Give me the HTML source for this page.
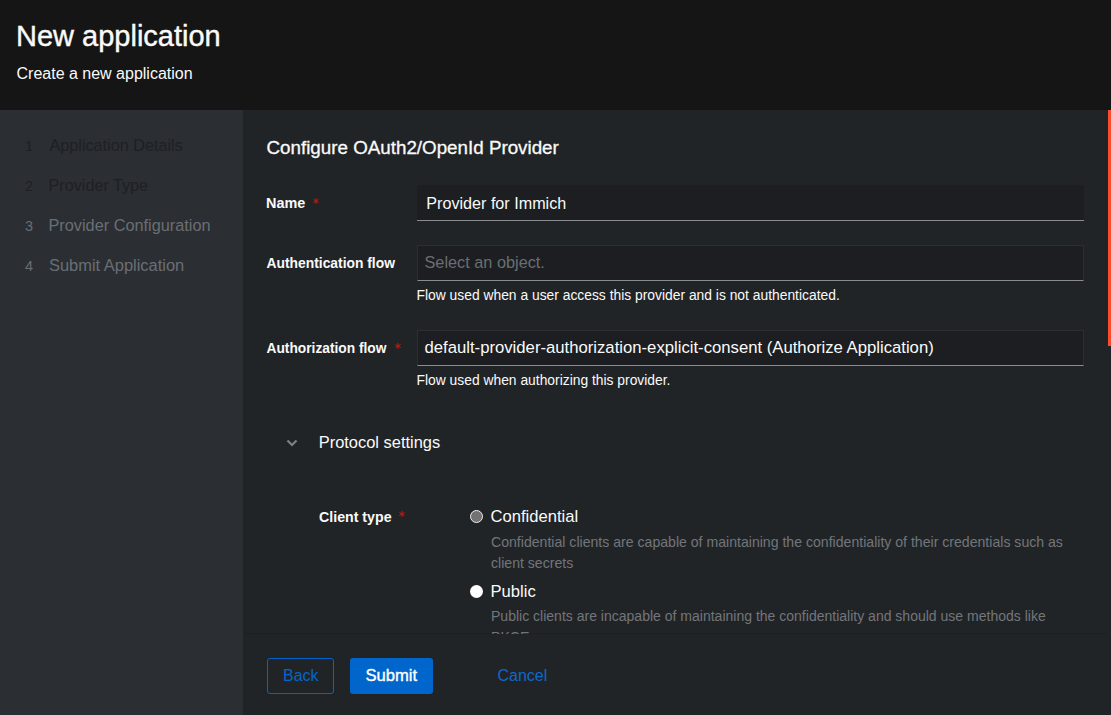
<!DOCTYPE html>
<html><head><meta charset="utf-8">
<style>
html,body{margin:0;padding:0;width:1111px;height:715px;overflow:hidden;background:#212427;font-family:"Liberation Sans",sans-serif;}
.a{position:absolute;white-space:nowrap;line-height:1;}
#hdr{position:absolute;left:0;top:0;width:1111px;height:110px;background:#151515;}
#nav{position:absolute;left:0;top:110px;width:243px;height:605px;background:#2b2e33;}
#main{position:absolute;left:243px;top:110px;width:868px;height:605px;background:#212427;}
#thumb{position:absolute;left:1108px;top:110px;width:3px;height:236px;background:#fd4b2d;}
.t{color:#fafafa;}
.lbl{font-weight:bold;font-size:14px;color:#fafafa;}
.ast{position:absolute;}
.inp{position:absolute;left:417px;width:667px;height:36px;box-sizing:border-box;background:#1c1e21;}
.inp.b{border:1px solid #2b2e33;border-bottom-color:#8a8d90;}
.inp.nb{border-bottom:1px solid #8a8d90;}
.help{font-size:13.85px;color:#fafafa;}
.desc{font-size:14.1px;color:#72767b;}
.nvn{font-size:14.5px;}
.nvl{font-size:16.2px;}
.dk{color:#1e2024;}
.gr{color:#6a6e73;}
.radio{position:absolute;left:470px;width:13px;height:13px;border-radius:50%;box-sizing:border-box;}
#clip{position:absolute;left:243px;top:110px;width:868px;height:524px;overflow:hidden;}
</style></head><body>
<div id="hdr"></div>
<div class="a t" style="left:16px;top:21.5px;font-size:29px;-webkit-text-stroke:0.4px #fafafa;">New application</div>
<div class="a t" style="left:16.5px;top:66.2px;font-size:16px;">Create a new application</div>

<div id="nav"></div>
<div class="a nvn dk" style="left:25px;top:138.7px;">1</div>
<div class="a nvl dk" style="left:49.5px;top:137.4px;">Application Details</div>
<div class="a nvn dk" style="left:25px;top:178.7px;">2</div>
<div class="a nvl dk" style="left:48.5px;top:177.4px;">Provider Type</div>
<div class="a nvn gr" style="left:25px;top:218.7px;">3</div>
<div class="a nvl gr" style="left:48.5px;top:217.4px;font-size:16.3px;">Provider Configuration</div>
<div class="a nvn gr" style="left:25px;top:258.7px;">4</div>
<div class="a nvl gr" style="left:49px;top:257.2px;font-size:16.45px;">Submit Application</div>

<div id="main"></div>
<div id="thumb"></div>
<div style="position:absolute;left:243px;top:633px;width:864px;height:1px;background:#1e1f22;"></div>

<div class="a t" style="left:266.5px;top:139.1px;font-size:18.8px;-webkit-text-stroke:0.3px #fafafa;">Configure OAuth2/OpenId Provider</div>

<div class="a lbl" style="left:266px;top:196px;font-size:14.4px;">Name</div>
<svg class="ast" style="left:312.4px;top:196.5px" width="8" height="8" viewBox="-4 -4 8 8"><path d="M0 -3V3M-2.6 -1.5L2.6 1.5M-2.6 1.5L2.6 -1.5" stroke="#c9190b" stroke-width="0.95"/></svg>
<div class="inp nb" style="top:185px;"></div>
<div class="a t" style="left:426.3px;top:195.1px;font-size:16.15px;">Provider for Immich</div>

<div class="a lbl" style="left:266.5px;top:256.9px;font-size:13.85px;">Authentication flow</div>
<div class="inp b" style="top:245px;"></div>
<div class="a" style="left:424.5px;top:253.9px;font-size:16.3px;color:#6a6e73;">Select an object.</div>
<div class="a help" style="left:416.5px;top:289.2px;">Flow used when a user access this provider and is not authenticated.</div>

<div class="a lbl" style="left:266.5px;top:341.9px;font-size:13.75px;">Authorization flow</div>
<svg class="ast" style="left:393.9px;top:341.5px" width="8" height="8" viewBox="-4 -4 8 8"><path d="M0 -3V3M-2.6 -1.5L2.6 1.5M-2.6 1.5L2.6 -1.5" stroke="#c9190b" stroke-width="0.95"/></svg>
<div class="inp b" style="top:330px;"></div>
<div class="a t" style="left:424.5px;top:339.5px;font-size:16.7px;">default-provider-authorization-explicit-consent (Authorize Application)</div>
<div class="a help" style="left:416.5px;top:374.2px;">Flow used when authorizing this provider.</div>

<div id="clip">
<svg style="position:absolute;left:43px;top:329px" width="12" height="8" viewBox="0 0 12 8"><path d="M1.5 1.5 L6 6 L10.5 1.5" fill="none" stroke="#7d8084" stroke-width="2.2"/></svg>
<div class="a t" style="left:75.7px;top:324.4px;font-size:16.45px;">Protocol settings</div>

<div class="a lbl" style="left:76px;top:400px;font-size:14.2px;">Client type</div>
<svg class="ast" style="left:154.9px;top:400.4px" width="8" height="8" viewBox="-4 -4 8 8"><path d="M0 -3V3M-2.6 -1.5L2.6 1.5M-2.6 1.5L2.6 -1.5" stroke="#c9190b" stroke-width="0.95"/></svg>

<div class="radio" style="top:400px;left:227px;border:1.7px solid #ededed;background:#737373;"></div>
<div class="a t" style="left:247.5px;top:399px;font-size:16.6px;">Confidential</div>
<div class="a desc" style="left:248px;top:425.4px;">Confidential clients are capable of maintaining the confidentiality of their credentials such as</div>
<div class="a desc" style="left:248px;top:445.6px;">client secrets</div>

<div class="radio" style="top:475px;left:227px;background:#ffffff;"></div>
<div class="a t" style="left:247.5px;top:474.2px;font-size:16.6px;">Public</div>
<div class="a desc" style="left:248px;top:499px;font-size:14.02px;">Public clients are incapable of maintaining the confidentiality and should use methods like</div>
<div class="a desc" style="left:248px;top:520.1px;">PKCE</div>
</div>

<div style="position:absolute;left:267px;top:658px;width:67px;height:36px;box-sizing:border-box;border:1px solid #0066cc;border-radius:3px;"></div>
<div class="a" style="left:283px;top:667.5px;font-size:16px;color:#0066cc;">Back</div>
<div style="position:absolute;left:350px;top:658px;width:83px;height:36px;background:#0066cc;border-radius:3px;"></div>
<div class="a" style="left:365.5px;top:668.3px;font-size:16.6px;color:#fff;-webkit-text-stroke:0.35px #fff;">Submit</div>
<div class="a" style="left:497.5px;top:668px;font-size:16px;color:#0d68cc;">Cancel</div>
</body></html>
